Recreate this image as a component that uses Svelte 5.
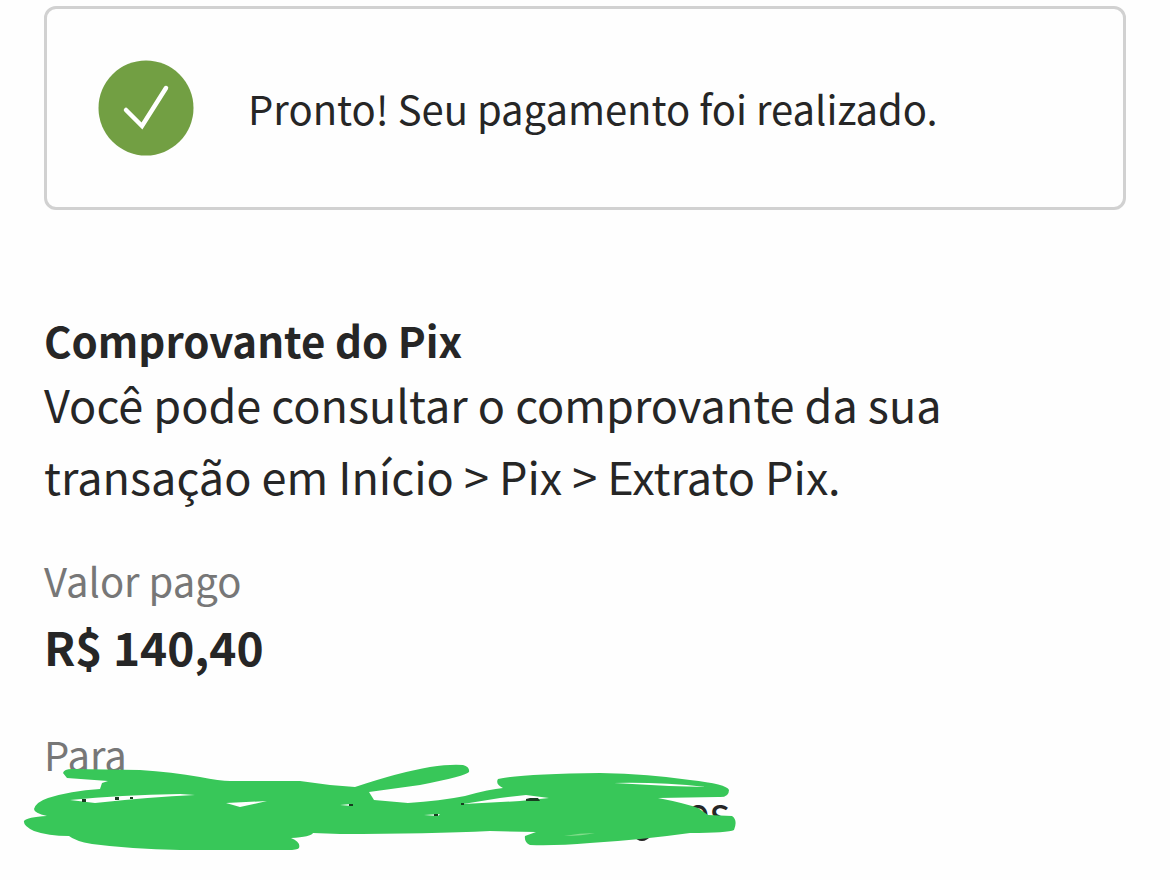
<script lang="ts">
  const message = "Pronto! Seu pagamento foi realizado.";
  const amount = "R$ 140,40";
</script>

<main class="receipt">
  <div class="notice" role="status">
    <svg class="check" viewBox="0 0 96 96" aria-hidden="true">
      <circle cx="48" cy="48" r="47.5" fill="#729f43" />
      <path
        d="M28 50 L44 66 L68 28"
        fill="none"
        stroke="#fff"
        stroke-width="4.5"
        stroke-linecap="round"
      />
    </svg>
    <p>{message}</p>
  </div>

  <section class="intro">
    <h1>Comprovante do Pix</h1>
    <p>
      Você pode consultar o comprovante da sua transação em Início &gt; Pix
      &gt; Extrato Pix.
    </p>
  </section>

  <dl>
    <div class="field">
      <dt>Valor pago</dt>
      <dd>{amount}</dd>
    </div>
    <div class="field">
      <dt>Para</dt>
      <dd class="hidden-name">
        <svg class="scribble" viewBox="20 760 720 95">
          <text x="685" y="830">es</text>
          <path d="M634 834 Q642 844 650 834" class="ink" />
          <path
            class="marker"
            d="M63 773 Q64 769 72 769 L140 770 Q172 772 200 777 Q220 781 230 781
              L300 781 L330 785 L355 787 Q400 772 430 767 Q450 764 463 765
              Q470 767 469 772 Q466 776 420 785 L369 792 L374 800 L408 803
              Q440 801 465 796 Q490 789 503 788 Q495 784 498 779
              Q520 774 600 773 Q650 774 690 780 Q727 784 729 790
              Q729 798 718 797 L658 798 Q684 803 698 808 L708 815 L732 816
              Q738 820 734 830 Q728 833 690 833 Q640 840 590 843
              Q555 846 530 845 Q524 842 525 836 L536 832 L490 831
              Q430 834 340 834 L313 833 Q311 837 291 838 Q301 842 299 848
              Q297 850 288 850 L180 850 Q130 849 92 844 Q75 841 69 836
              Q48 836 34 831 Q23 826 24 821 Q27 817 47 816
              Q34 813 34 809 Q36 802 48 798 Q70 791 100 789
              L102 783 L108 781 L67 778 Z"
          />
          <path
            class="gap"
            d="M70 800 Q120 795 180 794 L195 795 Q150 797 95 803 Z
              M226 803 L267 801 L240 807 Z
              M463 804 L500 798 L526 795 L549 798 L520 801 Z
              M614 783 Q660 782 706 787 Q660 786 614 783 Z
              M340 805 L351 804 L352 806 Z
              M424 815 L440 814 L438 816 Z"
          />
          <path class="glint" d="M564 836 Q580 833 595 833 Q582 836 564 836 Z" />
          <path
            class="spots"
            d="M82 799h4v3h-4z M115 797h4v3h-4z M130 797h3v2h-3z
              M349 804h4v2h-4z M434 814h4v2h-4z M461 803h3v2h-3z
              M526 799 L530 798 L538 798 L540 801 L526 801 Z"
          />
        </svg>
      </dd>
    </div>
  </dl>
</main>

<style>
  :global(body) {
    margin: 0;
    background: #fefefe;
  }

  .receipt {
    padding: 6px 44px 24px;
    color: #262626;
    font-family: "Noto Sans CJK JP", "Noto Sans", sans-serif;
  }

  p,
  h1,
  dl,
  dd {
    margin: 0;
  }

  .notice {
    display: flex;
    align-items: center;
    gap: 54px;
    padding: 51px;
    border: 3px solid #d1d1d1;
    border-radius: 12px;
  }

  .notice p {
    font-size: 40px;
    line-height: 56px;
  }

  .check {
    flex: none;
    width: 96px;
    height: 96px;
  }

  .intro {
    margin-top: 102px;
  }

  h1 {
    font-size: 42px;
    line-height: 56px;
  }

  .intro p {
    max-width: 960px;
    font-size: 45px;
    line-height: 72px;
  }

  dl {
    display: flex;
    flex-direction: column;
    gap: 42px;
    margin-top: 40px;
  }

  dt {
    color: #777;
    font-size: 40px;
    line-height: 56px;
  }

  dd {
    font-size: 46px;
    font-weight: 700;
    line-height: 76px;
  }

  .hidden-name {
    position: relative;
    height: 76px;
  }

  .scribble {
    position: absolute;
    top: -22px;
    left: -24px;
    width: 720px;
    height: 95px;
  }

  .scribble text {
    fill: #262626;
    font-size: 44px;
    font-weight: 400;
  }

  .ink {
    fill: none;
    stroke: #262626;
    stroke-width: 4px;
  }

  .marker {
    fill: #38c759;
  }

  .gap {
    fill: #fefefe;
  }

  .glint {
    fill: #83dd8c;
  }

  .spots {
    fill: #183d20;
  }
</style>
